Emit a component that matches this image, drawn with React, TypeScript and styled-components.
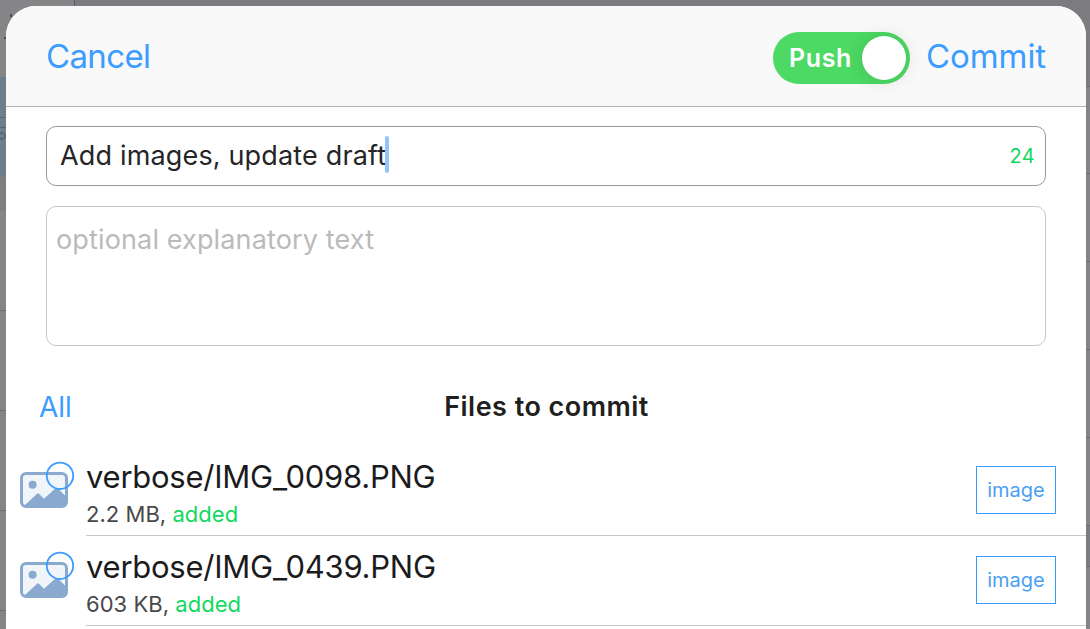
import React from "react";
import styled, { createGlobalStyle } from "styled-components";

const Global = createGlobalStyle`
  *{box-sizing:border-box}
  body{margin:0;overflow:hidden;font-family:Inter,"Liberation Sans",sans-serif;}
`;

const line = (x: number, y: number, w: number) =>
  `linear-gradient(#6b6b70,#6b6b70) ${x}px ${y}px/${w}px 1px no-repeat`;

const Backdrop = styled.div`
  width:1090px;height:629px;padding:6px 4px 0 6px;overflow:hidden;
  background:
    ${[310, 410, 510, 610].map(y => line(0, y, 6)).join(",")},
    ${[86, 173, 261, 349, 437, 525, 566].map(y => line(1086, y, 4)).join(",")},
    linear-gradient(#56656f,#56656f) 0 117px/6px 1px no-repeat,
    linear-gradient(#56656f,#56656f) 0 127px/6px 1px no-repeat,
    radial-gradient(circle at 2px 136px,transparent 2px,#56656f 2.6px 3.4px,transparent 4px) 0 0/6px 145px no-repeat,
    linear-gradient(#4c4c4f,#4c4c4f) 10px 14px/2px 3px no-repeat,
    linear-gradient(#4c4c4f,#4c4c4f) 4px 37px/2px 2px no-repeat,
    linear-gradient(#59595c,#59595c) 74px 0/1px 6px no-repeat,
    linear-gradient(#6d7f8d,#6d7f8d) 0 77px/6px 100px no-repeat,
    linear-gradient(#7f7f81,#7f7f81) 0 177px/6px 34px no-repeat,
    linear-gradient(90deg,#858587 0 74px,#7b7b80 74px) 0 0/1090px 6px no-repeat,
    linear-gradient(#7b7b80,#7b7b80) 1050px 0/40px 86px no-repeat,
    linear-gradient(#7b7b83,#7b7b83) 1086px 525px/4px 41px no-repeat,
    #858587;
`;
const Sheet = styled.div`
  height:660px;background:#fff;border-radius:30px 30px 0 0;overflow:hidden;
`;
const Header = styled.header`
  height:101px;background:#f9f9f9;border-bottom:1px solid #b0b0b2;
  display:flex;align-items:center;padding:0 40px 0 40px;
`;
const Action = styled.button<{ $size: number; $track: number }>`
  border:0;background:none;padding:0;color:#3c9cff;font-family:inherit;white-space:nowrap;
  font-size:${p => p.$size}px;letter-spacing:${p => p.$track}px;line-height:40px;
`;
const Toggle = styled.div`
  margin-left:auto;margin-right:16px;margin-top:3px;width:137px;height:52px;border-radius:26px;background:#4cd964;
  display:flex;align-items:center;justify-content:space-between;padding:0 4px 0 16px;
  color:#fff;font-size:25px;letter-spacing:.6px;font-weight:600;
`;
const Knob = styled.span`
  width:44px;height:44px;border-radius:50%;background:#fff;box-shadow:0 0 20px rgba(0,0,0,.13);
`;
const Form = styled.div`
  padding:19px 40px 0;display:flex;flex-direction:column;gap:20px;
`;
const Summary = styled.div`
  height:60px;border:1px solid #98989a;border-radius:10px;display:flex;align-items:center;
  padding:0 10px 2px 13px;font-size:27px;letter-spacing:.16px;color:#252527;white-space:nowrap;
`;
const Caret = styled.i`
  width:4px;height:37px;border-radius:2px;background:#91c5fc;margin:-2px 0 0 -1px;
`;
const Count = styled.span`
  margin:2px 0 0 auto;color:#13d85f;font-size:20px;letter-spacing:.3px;
`;
const Details = styled.div`
  height:140px;border:1px solid #c6c6c8;border-radius:10px;padding:13px 9px;
  font-size:27px;letter-spacing:.14px;line-height:40px;color:#bababa;
`;
const ListHead = styled.div`
  height:100px;padding:41px 32px 0 33px;display:grid;grid-template-columns:1fr auto 1fr;align-items:start;justify-items:start;
`;
const Title = styled.h2`
  margin:0;font-size:27px;letter-spacing:.47px;font-weight:600;line-height:40px;color:#1f1f21;
`;
const Row = styled.div`
  height:90px;display:flex;padding-left:14px;
`;
const IconBox = styled.div`
  width:66px;flex:none;padding-top:15px;
`;
const Body = styled.div`
  flex:1;display:flex;justify-content:space-between;border-bottom:1px solid #c8c7cc;padding:11px 30px 0 0;
`;
const Name = styled.div`
  font-size:31px;letter-spacing:-.25px;line-height:40px;color:#1b1b1d;
`;
const Meta = styled.div`
  font-size:22px;letter-spacing:.03px;line-height:30px;margin-top:2px;color:#48484a;
`;
const Added = styled.span`
  color:#13d85f;
`;
const Tag = styled.div`
  width:80px;height:48px;border:1px solid #3c9cff;color:#4a9ff2;margin-top:9px;
  display:flex;align-items:center;justify-content:center;font-size:20px;
`;
const Icon = styled.svg`
  display:block;
`;

function ImageIcon() {
  return (
    <Icon width="56" height="48" viewBox="0 0 56 48">
      <rect x="1.5" y="12.5" width="45" height="33" rx="4.5" fill="#f0f5fa" stroke="#89a9cf" strokeWidth="3" />
      <circle cx="12.6" cy="23.8" r="4" fill="#89a9cf" />
      <path d="M5 44L16.8 32.9Q18 31.8 19.2 32.9L24 37.7L34.5 28.2Q36.5 26.6 38.5 28.2L45.5 35V45H6Z" fill="#89a9cf" />
      <circle cx="40" cy="14.8" r="13.2" fill="none" stroke="#3c9cff" strokeWidth="1.8" />
    </Icon>
  );
}

const files = [
  { name: "verbose/IMG_0098.PNG", size: "2.2 MB" },
  { name: "verbose/IMG_0439.PNG", size: "603 KB" },
];

export default function App() {
  return (
    <Backdrop>
      <Global />
      <Sheet>
        <Header>
          <Action $size={33} $track={-0.65}>Cancel</Action>
          <Toggle>Push<Knob /></Toggle>
          <Action $size={33} $track={-0.1}>Commit</Action>
        </Header>
        <Form>
          <Summary>Add images, update draft<Caret /><Count>24</Count></Summary>
          <Details>optional explanatory text</Details>
        </Form>
        <ListHead>
          <Action $size={28} $track={0}>All</Action>
          <Title>Files to commit</Title>
        </ListHead>
        {files.map(f => (
          <Row key={f.name}>
            <IconBox><ImageIcon /></IconBox>
            <Body>
              <div>
                <Name>{f.name}</Name>
                <Meta>{f.size}, <Added>added</Added></Meta>
              </div>
              <Tag>image</Tag>
            </Body>
          </Row>
        ))}
      </Sheet>
    </Backdrop>
  );
}
